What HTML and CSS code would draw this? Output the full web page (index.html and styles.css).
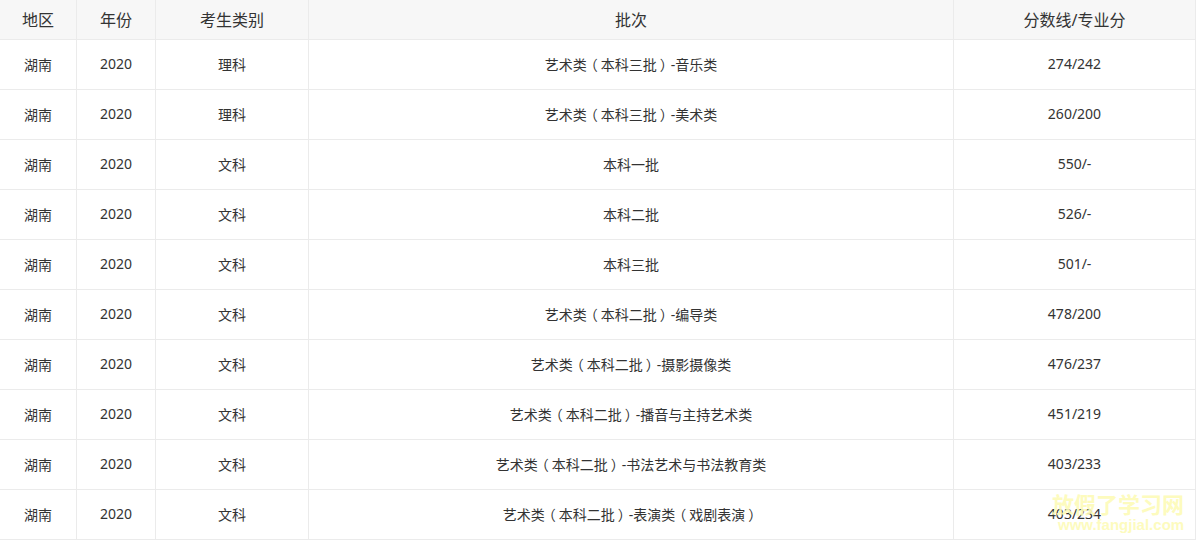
FILE: index.html
```html
<!DOCTYPE html>
<html lang="zh">
<head>
<meta charset="utf-8">
<link rel="stylesheet" href="styles.css">
</head>
<body>
<div class="wrap">
  <div class="table">
    <div class="row head">
      <div class="cell">地区</div><div class="cell">年份</div><div class="cell">考生类别</div><div class="cell">批次</div><div class="cell">分数线/专业分</div>
    </div>
    <div class="row"><div class="cell">湖南</div><div class="cell num">2020</div><div class="cell">理科</div><div class="cell">艺术类<span class="p">（</span>本科三批<span class="p">）</span>-音乐类</div><div class="cell num">274/242</div></div>
    <div class="row"><div class="cell">湖南</div><div class="cell num">2020</div><div class="cell">理科</div><div class="cell">艺术类<span class="p">（</span>本科三批<span class="p">）</span>-美术类</div><div class="cell num">260/200</div></div>
    <div class="row"><div class="cell">湖南</div><div class="cell num">2020</div><div class="cell">文科</div><div class="cell">本科一批</div><div class="cell num">550/-</div></div>
    <div class="row"><div class="cell">湖南</div><div class="cell num">2020</div><div class="cell">文科</div><div class="cell">本科二批</div><div class="cell num">526/-</div></div>
    <div class="row"><div class="cell">湖南</div><div class="cell num">2020</div><div class="cell">文科</div><div class="cell">本科三批</div><div class="cell num">501/-</div></div>
    <div class="row"><div class="cell">湖南</div><div class="cell num">2020</div><div class="cell">文科</div><div class="cell">艺术类<span class="p">（</span>本科二批<span class="p">）</span>-编导类</div><div class="cell num">478/200</div></div>
    <div class="row"><div class="cell">湖南</div><div class="cell num">2020</div><div class="cell">文科</div><div class="cell">艺术类<span class="p">（</span>本科二批<span class="p">）</span>-摄影摄像类</div><div class="cell num">476/237</div></div>
    <div class="row"><div class="cell">湖南</div><div class="cell num">2020</div><div class="cell">文科</div><div class="cell">艺术类<span class="p">（</span>本科二批<span class="p">）</span>-播音与主持艺术类</div><div class="cell num">451/219</div></div>
    <div class="row"><div class="cell">湖南</div><div class="cell num">2020</div><div class="cell">文科</div><div class="cell">艺术类<span class="p">（</span>本科二批<span class="p">）</span>-书法艺术与书法教育类</div><div class="cell num">403/233</div></div>
    <div class="row"><div class="cell">湖南</div><div class="cell num">2020</div><div class="cell">文科</div><div class="cell">艺术类<span class="p">（</span>本科二批<span class="p">）</span>-表演类<span class="p">（</span>戏剧表演<span class="p">）</span></div><div class="cell num">403/234</div></div>
  </div>
  <div class="watermark">
    <div class="wm-cn">放假了学习网</div>
    <div class="wm-en">www.fangjial.com</div>
  </div>
</div>
</body>
</html>
```

FILE: styles.css
```css
html, body {
  margin: 0;
  padding: 0;
  background: #ffffff;
}
body {
  font-family: "Noto Sans", "Noto Sans CJK SC", sans-serif;
  color: #333333;
}
.wrap {
  position: relative;
  width: 1196px;
  height: 545px;
}
.table {
  display: flex;
  flex-direction: column;
}
.row {
  display: grid;
  grid-template-columns: 77px 79px 153px 645px 242px;
  height: 50px;
}
.row.head {
  height: 40px;
  background: #f7f7f7;
}
.cell {
  box-sizing: border-box;
  border-right: 1px solid #ebebeb;
  border-bottom: 1px solid #ebebeb;
  display: flex;
  align-items: center;
  justify-content: center;
  padding-bottom: 2px;
  font-size: 14px;
  white-space: pre;
}
.row.head .cell {
  font-size: 16px;
}
.num {
  font-size: 14px;
}
.p {
  font-feature-settings: "palt";
  padding: 0 0.25em;
}
.watermark {
  position: absolute;
  left: 1052px;
  top: 489px;
  color: #fdfbb8;
  font-weight: bold;
  text-align: center;
  opacity: 0.9;
}
.wm-cn {
  font-family: "Noto Sans CJK SC", sans-serif;
  font-size: 22px;
  line-height: 28px;
}
.wm-en {
  font-family: "Liberation Sans", sans-serif;
  font-size: 15px;
  line-height: 16px;
  padding-left: 6px;
}
```
